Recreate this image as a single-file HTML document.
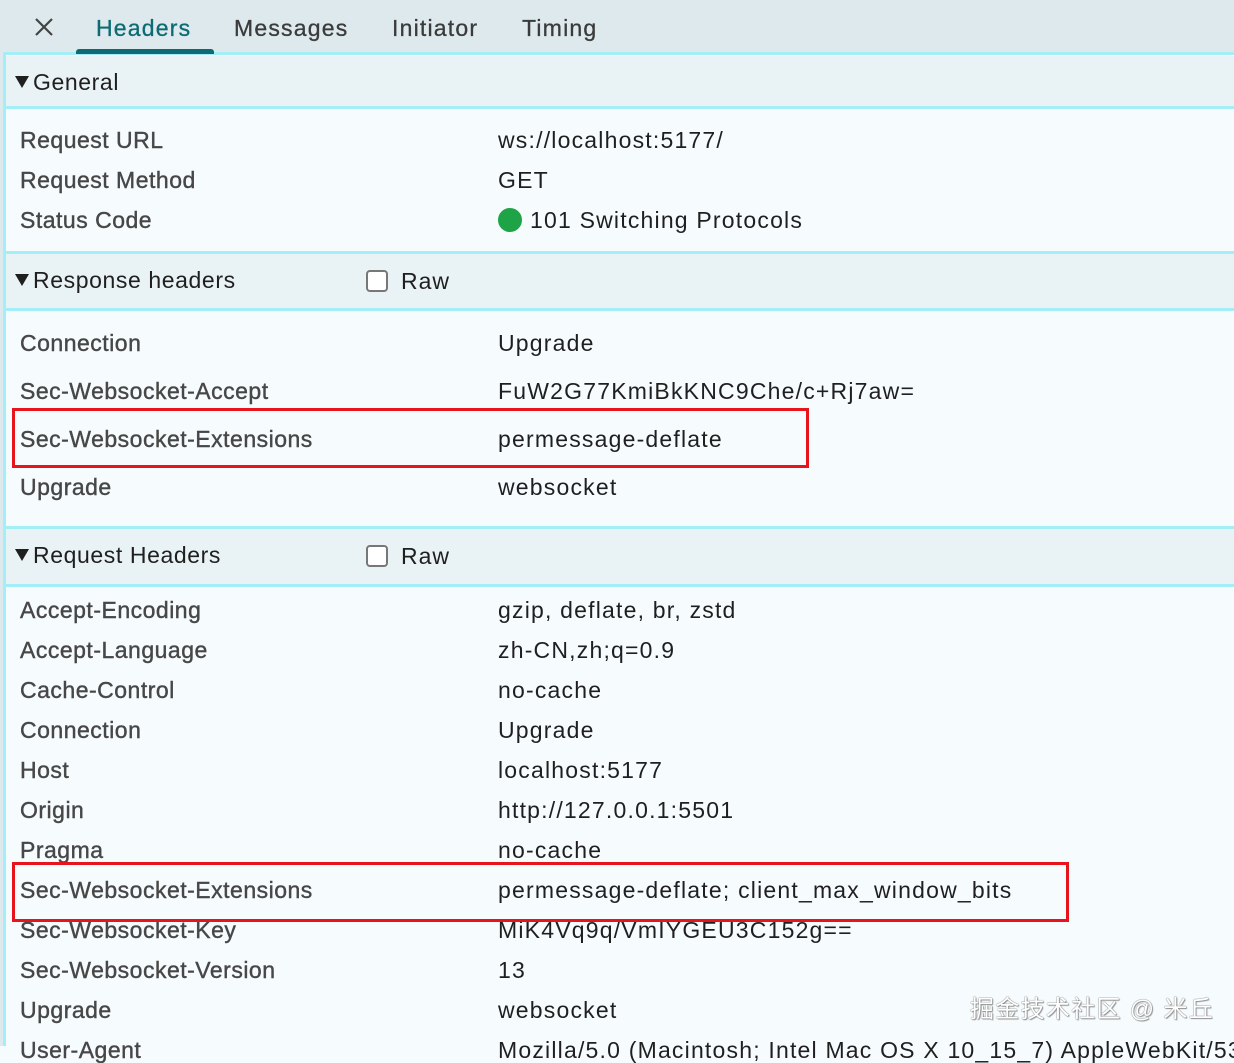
<!DOCTYPE html>
<html><head><meta charset="utf-8"><style>
*{margin:0;padding:0;box-sizing:border-box}
body{width:1234px;height:1046px;overflow:hidden;background:#f6fbfd;font-family:"Liberation Sans","Noto Sans CJK SC",sans-serif;font-size:23px;color:#1f1f1f;position:relative;letter-spacing:1px}
.a{position:absolute;white-space:nowrap}
.tabs{position:absolute;left:0;top:0;width:1234px;height:52px;background:#dde9ec}
.hl{position:absolute;left:4px;right:0;height:3px;background:#a3eef7}
.sec{position:absolute;left:6px;right:0;background:#e9f2f4}
.l{position:absolute;left:20px;color:#474747;white-space:nowrap;line-height:26px;letter-spacing:0.5px;-webkit-text-stroke:0.4px #474747}
.v{position:absolute;left:498px;white-space:nowrap;line-height:26px;letter-spacing:1.2px}
.h{position:absolute;left:15px;white-space:nowrap;line-height:26px;letter-spacing:0.6px}
.tri{display:inline-block;width:0;height:0;border-left:7px solid transparent;border-right:7px solid transparent;border-top:12px solid #1f1f1f;margin-right:4px;vertical-align:2px}
.cb{position:absolute;left:366px;width:22px;height:22px;border:2px solid #777;border-radius:4px;background:#fff}
.red{position:absolute;border:3px solid #e8141c}
.t{position:absolute;top:15px;color:#3b3b3b;letter-spacing:1.2px;-webkit-text-stroke:0.3px #3b3b3b}
</style></head><body>
<div class="tabs"></div>
<div class="a" style="left:0;top:0;width:4px;height:1046px;background:#dde9ec"></div>
<div class="a" style="left:3px;top:52px;width:3px;height:994px;background:#a3eef7"></div>
<div class="sec" style="top:56px;height:50px"></div>
<div class="sec" style="top:254px;height:55px"></div>
<div class="sec" style="top:529px;height:56px"></div>
<div class="hl" style="top:52px"></div>
<div class="hl" style="top:106px"></div>
<div class="hl" style="top:251px"></div>
<div class="hl" style="top:308px"></div>
<div class="hl" style="top:526px"></div>
<div class="hl" style="top:584px"></div>
<svg class="a" style="left:34px;top:17px" width="20" height="20"><path d="M2 2L18 18M18 2L2 18" stroke="#444" stroke-width="2.2"/></svg>
<div class="t" style="left:96px;color:#0c6b73;-webkit-text-stroke:0.3px #0c6b73">Headers</div>
<div class="a" style="left:76px;top:49px;width:138px;height:5px;background:#0c6b73;border-radius:3px 3px 0 0"></div>
<div class="t" style="left:234px">Messages</div>
<div class="t" style="left:392px">Initiator</div>
<div class="t" style="left:522px">Timing</div>

<div class="h" style="top:69px"><span class="tri"></span>General</div>
<div class="l" style="top:127px">Request URL</div><div class="v" style="top:127px">ws://localhost:5177/</div>
<div class="l" style="top:167px">Request Method</div><div class="v" style="top:167px">GET</div>
<div class="l" style="top:207px">Status Code</div><div class="v" style="top:207px"><span style="display:inline-block;width:24px;height:24px;border-radius:50%;background:#1ea446;vertical-align:-4px;margin-right:8px"></span>101 Switching Protocols</div>

<div class="h" style="top:267px"><span class="tri"></span>Response headers</div>
<div class="cb" style="top:270px"></div><div class="a" style="left:401px;top:268px">Raw</div>
<div class="l" style="top:330px">Connection</div><div class="v" style="top:330px">Upgrade</div>
<div class="l" style="top:378px">Sec-Websocket-Accept</div><div class="v" style="top:378px">FuW2G77KmiBkKNC9Che/c+Rj7aw=</div>
<div class="l" style="top:426px">Sec-Websocket-Extensions</div><div class="v" style="top:426px">permessage-deflate</div>
<div class="l" style="top:474px">Upgrade</div><div class="v" style="top:474px">websocket</div>
<div class="red" style="left:12px;top:408px;width:797px;height:60px"></div>

<div class="h" style="top:542px"><span class="tri"></span>Request Headers</div>
<div class="cb" style="top:545px"></div><div class="a" style="left:401px;top:543px">Raw</div>
<div class="l" style="top:597px">Accept-Encoding</div><div class="v" style="top:597px">gzip, deflate, br, zstd</div>
<div class="l" style="top:637px">Accept-Language</div><div class="v" style="top:637px">zh-CN,zh;q=0.9</div>
<div class="l" style="top:677px">Cache-Control</div><div class="v" style="top:677px">no-cache</div>
<div class="l" style="top:717px">Connection</div><div class="v" style="top:717px">Upgrade</div>
<div class="l" style="top:757px">Host</div><div class="v" style="top:757px">localhost:5177</div>
<div class="l" style="top:797px">Origin</div><div class="v" style="top:797px">http://127.0.0.1:5501</div>
<div class="l" style="top:837px">Pragma</div><div class="v" style="top:837px">no-cache</div>
<div class="l" style="top:877px">Sec-Websocket-Extensions</div><div class="v" style="top:877px">permessage-deflate; client_max_window_bits</div>
<div class="l" style="top:917px">Sec-Websocket-Key</div><div class="v" style="top:917px">MiK4Vq9q/VmIYGEU3C152g==</div>
<div class="l" style="top:957px">Sec-Websocket-Version</div><div class="v" style="top:957px">13</div>
<div class="l" style="top:997px">Upgrade</div><div class="v" style="top:997px">websocket</div>
<div class="l" style="top:1037px">User-Agent</div><div class="v" style="top:1037px">Mozilla/5.0 (Macintosh; Intel Mac OS X 10_15_7) AppleWebKit/537</div>
<div class="red" style="left:12px;top:862px;width:1057px;height:60px;background:transparent"></div>
<div class="a" style="left:970px;top:989px;color:#fff;font-size:24px;letter-spacing:1.3px;text-shadow:0 0 1px #777,0 0 1px #777,1px 1px 1px #999">掘金技术社区 @ 米丘</div>
</body></html>
